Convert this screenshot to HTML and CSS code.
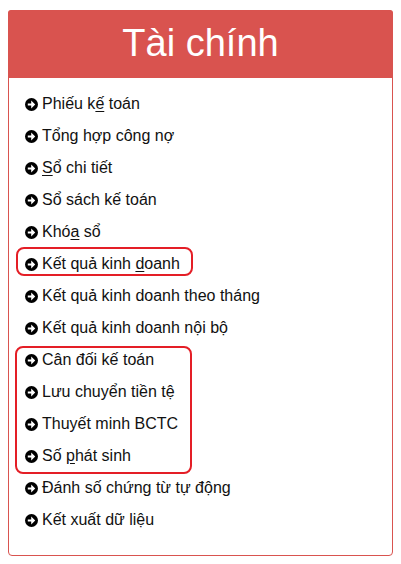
FILE: index.html
```html
<!DOCTYPE html>
<html lang="vi">
<head>
<meta charset="utf-8">
<title>Tài chính</title>
<link rel="stylesheet" href="styles.css">
</head>
<body>
<div class="panel">
  <div class="panel-heading">Tài chính</div>
  <ul class="menu">
    <li><svg class="ico" viewBox="0 0 13 13"><circle cx="6.5" cy="6.5" r="6.5"/><polygon points="2.8,5.4 6.2,5.4 6.2,2.6 10.2,6.5 6.2,10.4 6.2,7.6 2.8,7.6"/></svg><span>Phiếu k<u>ế</u> toán</span></li>
    <li><svg class="ico" viewBox="0 0 13 13"><circle cx="6.5" cy="6.5" r="6.5"/><polygon points="2.8,5.4 6.2,5.4 6.2,2.6 10.2,6.5 6.2,10.4 6.2,7.6 2.8,7.6"/></svg><span>Tổng hợp công nợ</span></li>
    <li><svg class="ico" viewBox="0 0 13 13"><circle cx="6.5" cy="6.5" r="6.5"/><polygon points="2.8,5.4 6.2,5.4 6.2,2.6 10.2,6.5 6.2,10.4 6.2,7.6 2.8,7.6"/></svg><span><u>S</u>ổ chi tiết</span></li>
    <li><svg class="ico" viewBox="0 0 13 13"><circle cx="6.5" cy="6.5" r="6.5"/><polygon points="2.8,5.4 6.2,5.4 6.2,2.6 10.2,6.5 6.2,10.4 6.2,7.6 2.8,7.6"/></svg><span>Sổ sách kế toán</span></li>
    <li><svg class="ico" viewBox="0 0 13 13"><circle cx="6.5" cy="6.5" r="6.5"/><polygon points="2.8,5.4 6.2,5.4 6.2,2.6 10.2,6.5 6.2,10.4 6.2,7.6 2.8,7.6"/></svg><span>Khó<u>a</u> sổ</span></li>
    <li><svg class="ico" viewBox="0 0 13 13"><circle cx="6.5" cy="6.5" r="6.5"/><polygon points="2.8,5.4 6.2,5.4 6.2,2.6 10.2,6.5 6.2,10.4 6.2,7.6 2.8,7.6"/></svg><span>Kết quả kinh <u>d</u>oanh</span></li>
    <li><svg class="ico" viewBox="0 0 13 13"><circle cx="6.5" cy="6.5" r="6.5"/><polygon points="2.8,5.4 6.2,5.4 6.2,2.6 10.2,6.5 6.2,10.4 6.2,7.6 2.8,7.6"/></svg><span>Kết quả kinh doanh theo tháng</span></li>
    <li><svg class="ico" viewBox="0 0 13 13"><circle cx="6.5" cy="6.5" r="6.5"/><polygon points="2.8,5.4 6.2,5.4 6.2,2.6 10.2,6.5 6.2,10.4 6.2,7.6 2.8,7.6"/></svg><span>Kết quả kinh doanh nội bộ</span></li>
    <li><svg class="ico" viewBox="0 0 13 13"><circle cx="6.5" cy="6.5" r="6.5"/><polygon points="2.8,5.4 6.2,5.4 6.2,2.6 10.2,6.5 6.2,10.4 6.2,7.6 2.8,7.6"/></svg><span>Cân đối kế toán</span></li>
    <li><svg class="ico" viewBox="0 0 13 13"><circle cx="6.5" cy="6.5" r="6.5"/><polygon points="2.8,5.4 6.2,5.4 6.2,2.6 10.2,6.5 6.2,10.4 6.2,7.6 2.8,7.6"/></svg><span>Lưu chuyển tiền tệ</span></li>
    <li><svg class="ico" viewBox="0 0 13 13"><circle cx="6.5" cy="6.5" r="6.5"/><polygon points="2.8,5.4 6.2,5.4 6.2,2.6 10.2,6.5 6.2,10.4 6.2,7.6 2.8,7.6"/></svg><span>Thuyết minh BCTC</span></li>
    <li><svg class="ico" viewBox="0 0 13 13"><circle cx="6.5" cy="6.5" r="6.5"/><polygon points="2.8,5.4 6.2,5.4 6.2,2.6 10.2,6.5 6.2,10.4 6.2,7.6 2.8,7.6"/></svg><span>Số <u>p</u>hát sinh</span></li>
    <li><svg class="ico" viewBox="0 0 13 13"><circle cx="6.5" cy="6.5" r="6.5"/><polygon points="2.8,5.4 6.2,5.4 6.2,2.6 10.2,6.5 6.2,10.4 6.2,7.6 2.8,7.6"/></svg><span>Đánh số chứng từ tự động</span></li>
    <li><svg class="ico" viewBox="0 0 13 13"><circle cx="6.5" cy="6.5" r="6.5"/><polygon points="2.8,5.4 6.2,5.4 6.2,2.6 10.2,6.5 6.2,10.4 6.2,7.6 2.8,7.6"/></svg><span>Kết xuất dữ liệu</span></li>
  </ul>
  <div class="mark mark-one"></div>
  <div class="mark mark-group"></div>
</div>
</body>
</html>
```

FILE: styles.css
```css
html, body {
  margin: 0;
  padding: 0;
  background: #ffffff;
}
body {
  padding: 10px 8px;
  font-family: "Liberation Sans", Arial, sans-serif;
}
.panel {
  position: relative;
  width: 385px;
  box-sizing: border-box;
  border: 1px solid #d9534f;
  border-radius: 4px;
  background: #ffffff;
}
.panel-heading {
  background: #d9534f;
  color: #ffffff;
  height: 67px;
  line-height: 64px;
  font-size: 38px;
  text-align: center;
  margin: -1px -1px 0 -1px;
  padding-top: 1px;
  border-radius: 3px 3px 0 0;
}
.menu {
  list-style: none;
  margin: 0;
  padding: 10px 0 19px 16px;
}
.menu li {
  display: flex;
  align-items: center;
  height: 32px;
  font-size: 16px;
  color: #111111;
  white-space: nowrap;
}
.menu li span {
  white-space: pre;
}
.ico {
  width: 13px;
  height: 13px;
  margin-right: 4px;
  flex: none;
  position: relative;
  top: 0.5px;
}
.ico circle { fill: #000000; }
.ico polygon { fill: #ffffff; }
.menu u {
  text-decoration-thickness: 1px;
  text-underline-offset: 2px;
}
.mark {
  position: absolute;
  box-sizing: border-box;
  border: 2px solid #e41e26;
  border-radius: 8px;
  pointer-events: none;
}
.mark-one {
  left: 7px;
  top: 236px;
  width: 177px;
  height: 29px;
}
.mark-group {
  left: 6px;
  top: 335px;
  width: 177px;
  height: 128px;
}
```
